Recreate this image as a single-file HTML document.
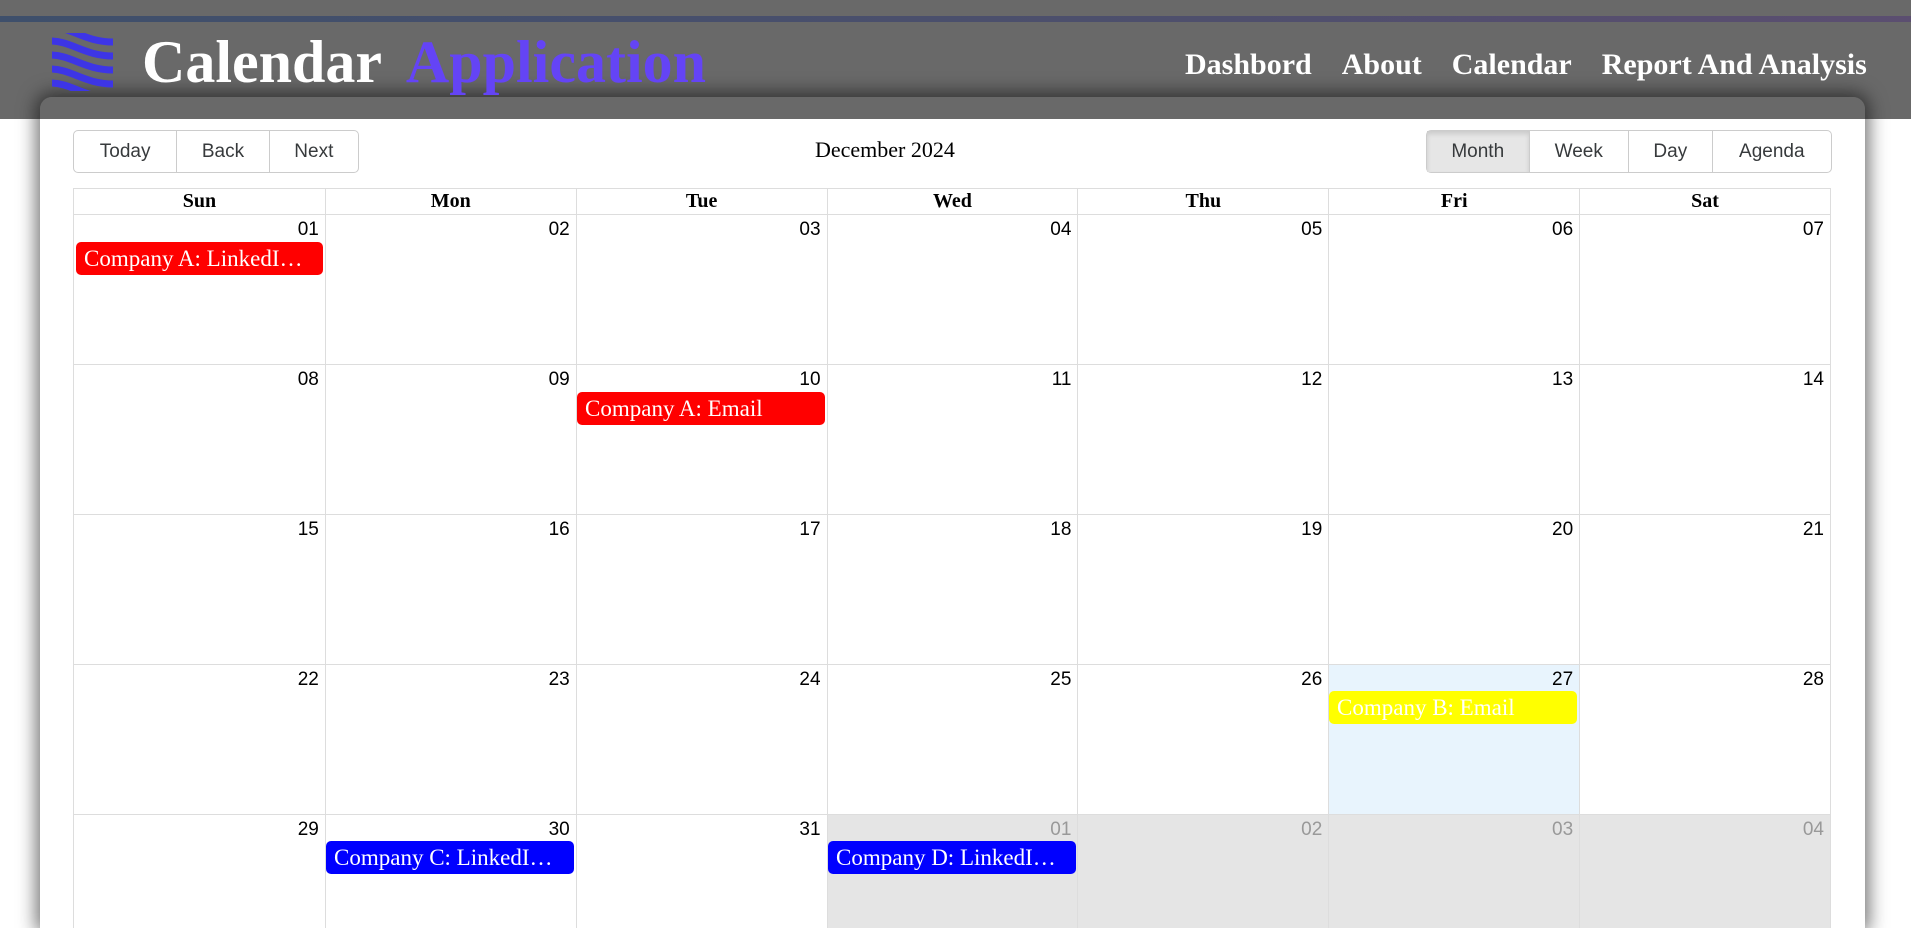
<!DOCTYPE html>
<html style="overflow:hidden;width:1911px;height:928px"><head><meta charset="utf-8"><style>
*{box-sizing:border-box;margin:0;padding:0}
body{width:1911px;height:928px;overflow:hidden;background:#fff;position:relative;font-family:"Liberation Sans",sans-serif}
.hdr{position:absolute;left:0;top:0;width:1911px;height:119px;background:#696969}
.line{position:absolute;left:0;top:16px;width:1911px;height:6px;background:linear-gradient(90deg,#3e4f6b,#4d4f6c 60%,#5b4e70)}
.title{position:absolute;left:142px;top:28px;font:bold 60px "Liberation Serif",serif;color:#fff;white-space:nowrap}
.title span{color:#6444f5;margin-left:10px}
.nav{position:absolute;left:1185px;top:48px;font:bold 30px "Liberation Serif",serif;color:#fff;white-space:nowrap}
.nav span{margin-left:30px}
.card{position:absolute;left:40px;top:97px;width:1825px;height:831px;border-radius:12px 12px 0 0;background:linear-gradient(#696969 0,#696969 22px,#fff 22px);box-shadow:0 0 18px 4px rgba(0,0,0,.55)}
.bg{position:absolute;display:flex;border:1px solid #ccc;border-radius:5px;height:43px;top:130px}
.bg div{border-left:1px solid #ccc;display:flex;align-items:center;justify-content:center;font-size:19px;color:#373a3c}
.bg div:first-child{border-left:none}
.lbl{position:absolute;top:137px;left:815px;font:22px "Liberation Serif",serif;color:#000;white-space:nowrap}
.tbl{position:absolute;left:73px;top:188px;width:1758px;border:1px solid #ddd}
.head{display:grid;grid-template-columns:repeat(7,1fr);height:26px;border-bottom:1px solid #ddd}
.head div{border-left:1px solid #ddd;text-align:center;font:bold 20px "Liberation Serif",serif;line-height:25px}
.head div:first-child,.row div.c:first-child{border-left:none}
.row{display:grid;grid-template-columns:repeat(7,1fr);height:150px;border-bottom:1px solid #ddd;position:relative}
.c{border-left:1px solid #ddd;text-align:right;padding:4px 6px 0 0;font-size:19px;color:#000}
.off{background:#e5e5e5;color:#999}
.today{background:#e8f4fd}
.ev{position:absolute;height:33px;border-radius:5px;color:#fff;font:23px "Liberation Serif",serif;line-height:33px;padding-left:8px;white-space:nowrap;overflow:hidden}
</style></head><body>
<div class="hdr"></div><div class="line"></div>
<div class="card"></div>
<svg style="position:absolute;left:52px;top:33px" width="61" height="58" viewBox="0 0 61 58">
<defs><clipPath id="k"><rect x="0" y="0" width="61" height="58"/></clipPath></defs>
<g clip-path="url(#k)" fill="none" stroke="#3d35e6" stroke-width="7">
<path d="M-2 -6 C20 -6 32 9 62 9"/>
<path d="M-2 8 C20 8 32 23 62 23"/>
<path d="M-2 22 C20 22 32 37 62 37"/>
<path d="M-2 36 C20 36 32 51 62 51"/>
<path d="M-2 50 C20 50 32 65 62 65"/>
</g></svg>
<div class="title">Calendar <span>Application</span></div>
<div class="nav">Dashbord<span>About</span><span>Calendar</span><span>Report And Analysis</span></div>
<div class="bg" style="left:73px;width:286px"><div style="width:103px">Today</div><div style="width:93px">Back</div><div style="width:90px">Next</div></div>
<div class="lbl">December 2024</div>
<div class="bg" style="left:1426px;width:406px"><div style="width:102px;background:#e6e6e6;box-shadow:inset 0 3px 5px rgba(0,0,0,.12)">Month</div><div style="width:100px">Week</div><div style="width:84px">Day</div><div style="width:120px">Agenda</div></div>
<div class="tbl">
<div class="head"><div>Sun</div><div>Mon</div><div>Tue</div><div>Wed</div><div>Thu</div><div>Fri</div><div>Sat</div></div>
<div class="row"><div class="c">01</div><div class="c">02</div><div class="c">03</div><div class="c">04</div><div class="c">05</div><div class="c">06</div><div class="c">07</div></div>
<div class="row"><div class="c">08</div><div class="c">09</div><div class="c">10</div><div class="c">11</div><div class="c">12</div><div class="c">13</div><div class="c">14</div></div>
<div class="row"><div class="c">15</div><div class="c">16</div><div class="c">17</div><div class="c">18</div><div class="c">19</div><div class="c">20</div><div class="c">21</div></div>
<div class="row"><div class="c">22</div><div class="c">23</div><div class="c">24</div><div class="c">25</div><div class="c">26</div><div class="c today">27</div><div class="c">28</div></div>
<div class="row"><div class="c">29</div><div class="c">30</div><div class="c">31</div><div class="c off">01</div><div class="c off">02</div><div class="c off">03</div><div class="c off">04</div></div>
</div>
<div class="ev" style="left:76px;top:242px;width:247px;background:#f00">Company A: LinkedI…</div>
<div class="ev" style="left:577px;top:392px;width:248px;background:#f00">Company A: Email</div>
<div class="ev" style="left:1329px;top:691px;width:248px;background:#ff0">Company B: Email</div>
<div class="ev" style="left:326px;top:841px;width:248px;background:#00f">Company C: LinkedI…</div>
<div class="ev" style="left:828px;top:841px;width:248px;background:#00f">Company D: LinkedI…</div>
</body></html>
